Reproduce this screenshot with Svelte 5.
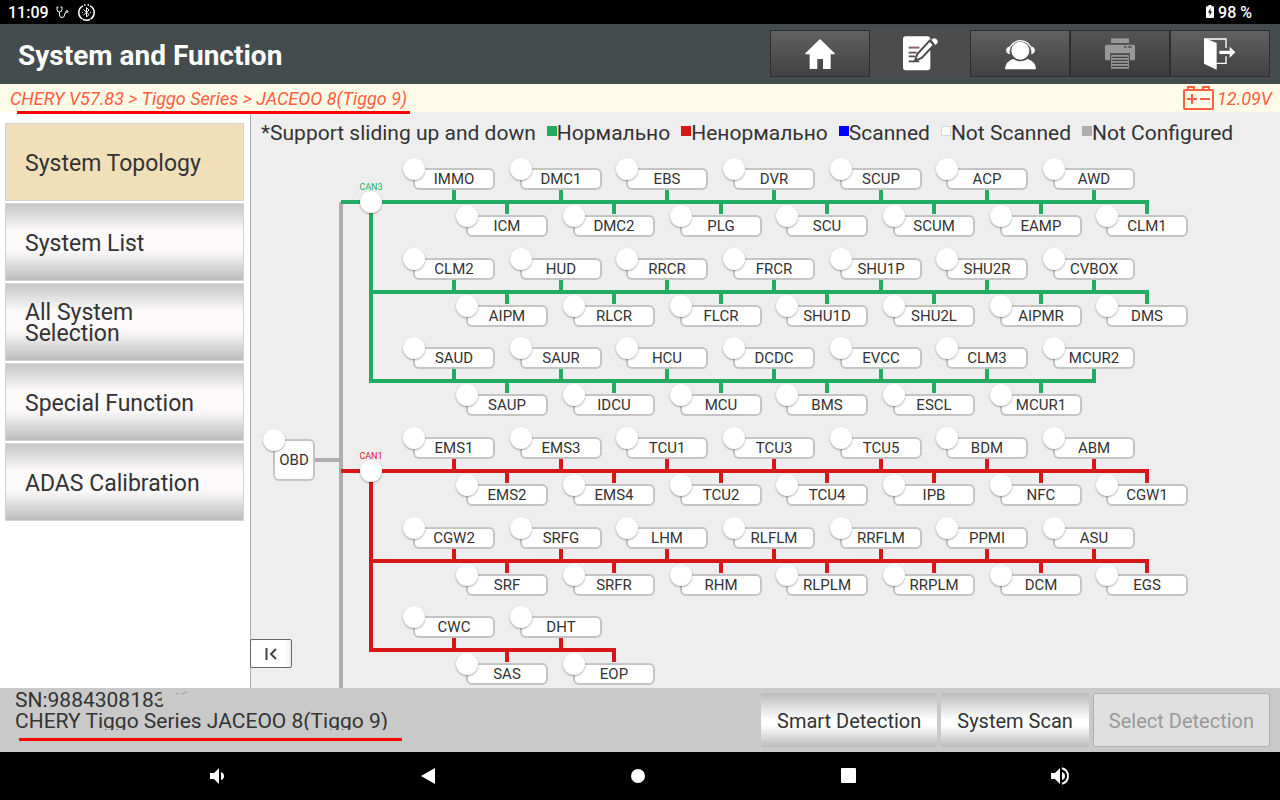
<script lang="ts">
    type Bus = {
        y: number;
        color: string;
        nodes: string[];
    };

    const GREEN = "#22ac62";
    const RED = "#d91616";

    // distance between two neighbouring modules, alternating above / below the bus
    const FIRST_X = 203;
    const STEP = 160 / 3;

    const buses: Bus[] = [
        { y: 50, color: GREEN, nodes: ["IMMO", "ICM", "DMC1", "DMC2", "EBS", "PLG", "DVR", "SCU", "SCUP", "SCUM", "ACP", "EAMP", "AWD", "CLM1"] },
        { y: 140, color: GREEN, nodes: ["CLM2", "AIPM", "HUD", "RLCR", "RRCR", "FLCR", "FRCR", "SHU1D", "SHU1P", "SHU2L", "SHU2R", "AIPMR", "CVBOX", "DMS"] },
        { y: 229, color: GREEN, nodes: ["SAUD", "SAUP", "SAUR", "IDCU", "HCU", "MCU", "DCDC", "BMS", "EVCC", "ESCL", "CLM3", "MCUR1", "MCUR2"] },
        { y: 319, color: RED, nodes: ["EMS1", "EMS2", "EMS3", "EMS4", "TCU1", "TCU2", "TCU3", "TCU4", "TCU5", "IPB", "BDM", "NFC", "ABM", "CGW1"] },
        { y: 409, color: RED, nodes: ["CGW2", "SRF", "SRFG", "SRFR", "LHM", "RHM", "RLFLM", "RLPLM", "RRFLM", "RRPLM", "PPMI", "DCM", "ASU", "EGS"] },
        { y: 498, color: RED, nodes: ["CWC", "SAS", "DHT", "EOP"] }
    ];

    const hubs = [
        { name: "CAN3", y: 50, end: 229, color: GREEN },
        { name: "CAN1", y: 319, end: 498, color: RED }
    ];

    const legend = [
        { label: "Нормально", color: GREEN },
        { label: "Ненормально", color: RED },
        { label: "Scanned", color: "#0000ff" },
        { label: "Not Scanned", color: "#ffffff" },
        { label: "Not Configured", color: "#aeaeae" }
    ];

    const menu = ["System Topology", "System List", "All System Selection", "Special Function", "ADAS Calibration"];
    let activeMenu = $state("System Topology");

    function nodeX(i: number) {
        return Math.round(FIRST_X + i * STEP);
    }

    function busPath(bus: Bus) {
        const isHubRow = hubs.some((h) => h.y === bus.y);
        let d = `M${isHubRow ? 90 : 120} ${bus.y}H${nodeX(bus.nodes.length - 1) + 2}`;
        bus.nodes.forEach((_, i) => {
            d += `M${nodeX(i)} ${bus.y}v${i % 2 ? 12 : -12}`;
        });
        return d;
    }
</script>

<div class="screen">
    <div class="status">
        <span>11:09</span>
        <svg class="steth" width="13" height="13" viewBox="0 0 13 13" fill="none" stroke="#fff">
            <path d="M2.500 1H1v2.500a2.500 2.500 0 0 0 5 0V1H4.500M3.500 6v3a2.500 2.500 0 0 0 5 0q0-2.500 2-3" />
            <circle cx="11" cy="5.500" r="1" />
        </svg>
        <svg width="17" height="17" viewBox="0 0 17 17" fill="none" stroke="#fff">
            <path d="M5 1.800A7.500 7.500 0 0 0 4.500 15M12 1.800A7.500 7.500 0 0 1 12.500 15M5 15.500q3.500 1.500 7 0M6 .9h1.500M9.500 .9H11" stroke-width="1.500" />
            <path d="M5.500 5.500l5.500 5-2.500 2.500V3.500L11 6l-5.500 5M4 8.300h1M12 8.300h1" />
        </svg>
        <span class="battery">
            <svg width="8" height="13" viewBox="0 0 8 13">
                <path d="M2.500 0h3v1.300H7q1 0 1 1V12q0 1-1 1H1q-1 0-1-1V2.300q0-1 1-1h1.500z" fill="#fff" />
                <path d="M4.800 3L2 7.500h1.800L3.400 11 6 6.500H4.300z" fill="#000" />
            </svg>
            98 %
        </span>
    </div>

    <header>
        <h1>System and Function</h1>
        <div class="tools">
            <button aria-label="Home">
                <svg width="30" height="30" viewBox="0 0 90 90" fill="#fff">
                    <path d="M45 0L89 43v3H77v44H54V60H37v30H14V46H1v-3z" />
                </svg>
            </button>
            <button class="current" aria-label="Report">
                <svg width="35" height="35" viewBox="0 0 105 105">
                    <path d="M8 1h65q9 0 9 9v84q0 9-9 9H8q-8 0-8-9V9q0-8 8-8z" fill="#fff" />
                    <path d="M17 35h32M17 50h24M17 61h20M17 76h32" fill="none" stroke="#5a4a4c" stroke-width="5" />
                    <path d="M17 33h32M17 52h24" fill="none" stroke="#e39aa0" stroke-width="2" />
                    <path d="M80 14L93 27 56 66 36 74 43 54z" fill="#fff" stroke="#4c4c4c" stroke-width="6" />
                    <path d="M85 11q8-8 15-2 8 7 1 15l-4 3z" fill="#fff" />
                </svg>
            </button>
            <button aria-label="Support">
                <svg width="31" height="32" viewBox="0 0 93 96" fill="#fff">
                    <circle cx="46" cy="38" r="27" />
                    <path d="M13 36A34 34 0 0 1 80 36" fill="none" stroke="#fff" stroke-width="4" />
                    <path d="M14 25v24Q4 47 3 37q1-9 11-12zM79 25v24q10-2 11-12-1-9-11-12z" />
                    <path d="M0 94Q2 69 25 63q21 14 43 0 23 6 25 31z" />
                </svg>
            </button>
            <button class="off" disabled aria-label="Print">
                <svg width="30" height="31" viewBox="0 0 90 93" fill="#999">
                    <path d="M18 1h54v14H18z" />
                    <path d="M5 20h80q5 0 5 5v37q0 5-5 5H75V46H15v21H5q-5 0-5-5V25q0-5 5-5z" />
                    <path d="M57 25h8v4h-8zM70 25h10v4H70z" fill="#4a4a4a" />
                    <path d="M19 51h52v5H19zM21 60h48v5H21zM21 69h48v5H21zM21 78h48v5H21zM19 87h52v5H19z" />
                    <path d="M20 52v39M70 52v39" stroke="#999" stroke-width="3" />
                </svg>
            </button>
            <button aria-label="Exit">
                <svg width="32" height="32" viewBox="0 0 96 96" fill="#fff">
                    <path d="M0 1h4l34 14v80L0 77z" />
                    <path d="M4 3h62v27M66 55v21H38" fill="none" stroke="#fff" stroke-width="4" />
                    <path d="M46 38h31V26l17 17-17 16V48H46z" />
                </svg>
            </button>
        </div>
    </header>

    <div class="path">
        <span>CHERY V57.83 &gt; Tiggo Series &gt; JACEOO 8(Tiggo 9)</span>
        <i class="mark top"></i>
        <span class="volt">
            <svg width="31" height="24" viewBox="0 0 31 24" fill="none" stroke="#ff6040" stroke-width="2">
                <rect x="1" y="4" width="29" height="19" rx="1" />
                <path d="M5 4V1h6v3M20 4V1h6v3M4 13h10M9 8v10M17 13h10" />
            </svg>
            12.09V
        </span>
    </div>

    <main>
        <nav>
            {#each menu as item}
                <button class:active={activeMenu === item} onclick={() => (activeMenu = item)}>
                    <span>{item}</span>
                </button>
            {/each}
        </nav>

        <section>
            <div class="legend">
                <span>*Support sliding up and down</span>
                {#each legend as l}
                    <span class="key">
                        <i class:outlined={l.color === "#ffffff"} style="background: {l.color}"></i>{l.label}
                    </span>
                {/each}
            </div>

            <div class="topology">
                <svg class="wires" width="960" height="560" fill="none" stroke-width="4">
                    <path d="M90 50V560M60 308H90" stroke="#aeaeae" />
                    {#each buses as bus}
                        <path d={busPath(bus)} stroke={bus.color} />
                    {/each}
                    {#each hubs as hub}
                        <path d="M120 {hub.y}V{hub.end + 2}" stroke={hub.color} />
                    {/each}
                </svg>

                <button class="node obd">OBD</button>

                {#each hubs as hub}
                    <div class="hub" style="top: {hub.y - 18}px; color: {hub.color}">
                        {hub.name}
                        <i class="dot"></i>
                    </div>
                {/each}

                {#each buses as bus}
                    {#each bus.nodes as name, i}
                        <button class="node" style="left: {nodeX(i) - 41}px; top: {bus.y + (i % 2 ? 13 : -34)}px">{name}</button>
                    {/each}
                {/each}
            </div>

            <button class="collapse" aria-label="Collapse menu">
                <svg width="12" height="12" viewBox="0 0 12 12" fill="none" stroke="#444" stroke-width="2">
                    <path d="M1.500 0v12M11 1L6 6l5 5" />
                </svg>
            </button>
        </section>
    </main>

    <footer>
        <div class="vehicle">
            <div class="serial">
                SN:9884308183
                <svg class="smudge" width="32" height="21" viewBox="0 0 32 21">
                    <path d="M6 0h26v21H4l3-5-3-4 1-4-1-4z" fill="#c9c9c9" />
                    <path d="M19 4l3-1M25 4l5-2" stroke="#999" />
                </svg>
            </div>
            <div>CHERY Tiggo Series JACEOO 8(Tiggo 9)</div>
        </div>
        <i class="mark bottom"></i>
        <div class="actions">
            <button>Smart Detection</button>
            <button>System Scan</button>
            <button disabled>Select Detection</button>
        </div>
    </footer>

    <div class="navbar">
        <button aria-label="Volume down">
            <svg width="16" height="16" viewBox="0 0 16 16" fill="#fff"><path d="M1 5h4l5-5v16l-5-5H1zM12 4q3 1 3 4t-3 4z" /></svg>
        </button>
        <button aria-label="Back">
            <svg width="16" height="16" viewBox="0 0 16 16" fill="#fff"><path d="M15 0v16L1 8z" /></svg>
        </button>
        <button aria-label="Home screen">
            <svg width="16" height="16" viewBox="0 0 16 16" fill="#fff"><circle cx="8" cy="8" r="7" /></svg>
        </button>
        <button aria-label="Recent apps">
            <svg width="16" height="16" viewBox="0 0 16 16" fill="#fff"><rect width="15" height="15" rx="1" /></svg>
        </button>
        <button aria-label="Volume up">
            <svg width="18" height="18" viewBox="0 0 18 18" fill="#fff">
                <path d="M0 6h4l5-5v16l-5-5H0zM11 5q3 1 3 4t-3 4z" />
                <path d="M11 1.200q6 1.800 6 7.800t-6 7.800" fill="none" stroke="#fff" stroke-width="2" />
            </svg>
        </button>
    </div>
</div>

<style>
    :global(body) {
        margin: 0;
    }
    .screen {
        display: flex;
        flex-direction: column;
        height: 100vh;
        overflow: hidden;
        font-family: Roboto, sans-serif;
        color: #333;
        background: #fff;
    }
    button {
        font: inherit;
        color: inherit;
        margin: 0;
        padding: 0;
        border: none;
        background: none;
        cursor: pointer;
    }
    svg {
        display: block;
    }
    .status {
        display: flex;
        align-items: center;
        height: 24px;
        padding: 0 28px 0 8px;
        background: #000;
        color: #fff;
        font-size: 16px;
        font-weight: 500;
    }
    .steth {
        margin: 0 9px 0 7px;
    }
    .battery {
        display: flex;
        align-items: center;
        gap: 4px;
        margin-left: auto;
    }
    .battery svg {
        margin-bottom: 2px;
    }
    header {
        display: flex;
        align-items: center;
        justify-content: space-between;
        height: 60px;
        padding: 0 10px 0 18px;
        background: #444c4e;
    }
    h1 {
        margin: 0;
        padding-top: 2px;
        font-size: 28px;
        font-weight: 700;
        color: #fff;
    }
    .tools {
        display: flex;
        padding-bottom: 1px;
    }
    .tools button {
        display: flex;
        align-items: center;
        justify-content: center;
        box-sizing: border-box;
        width: 100px;
        height: 47px;
        border: 1px solid #2d2d2d;
        background: linear-gradient(#616161, #414141);
    }
    .tools .current {
        border-color: #4c4c4c;
        background: #4c4c4c;
    }
    .tools .off {
        background: linear-gradient(#555, #3b3b3b);
    }
    .path {
        position: relative;
        display: flex;
        align-items: center;
        justify-content: space-between;
        height: 28px;
        padding: 0 8px 0 10px;
        background: #fffbe9;
        color: #ff6040;
        font-size: 18px;
        font-style: italic;
    }
    .volt {
        display: flex;
        align-items: center;
        gap: 3px;
    }
    .mark {
        position: absolute;
        z-index: 2;
        height: 3px;
        background: #f00;
    }
    .mark.top {
        left: 17px;
        bottom: -2px;
        width: 393px;
    }
    .mark.bottom {
        left: 19px;
        bottom: 11px;
        width: 383px;
    }
    main {
        display: flex;
        flex: 1;
        min-height: 0;
    }
    nav {
        display: flex;
        flex-direction: column;
        gap: 2px;
        box-sizing: border-box;
        width: 251px;
        padding: 11px 6px 0 5px;
        border-right: 1px solid #a9adb9;
    }
    nav button {
        display: flex;
        align-items: center;
        box-sizing: border-box;
        height: 78px;
        padding: 2px 36px 0 19px;
        border: 1px solid #d2d2d2;
        background: linear-gradient(#c6c6c6, #fbf9fa 35%, #fbf9fa 62%, #bcbcbc);
        font-size: 23px;
        line-height: 21px;
        text-align: left;
    }
    nav .active {
        background: #f1dfb9;
    }
    section {
        position: relative;
        display: flex;
        flex: 1;
        flex-direction: column;
        min-width: 0;
        background: #eee;
    }
    .legend {
        display: flex;
        align-items: center;
        gap: 11px;
        box-sizing: border-box;
        height: 40px;
        padding: 2px 0 0 10px;
        font-size: 21px;
        white-space: nowrap;
    }
    .key {
        display: flex;
    }
    .key i {
        box-sizing: border-box;
        width: 10px;
        height: 10px;
        margin-top: 5px;
    }
    .outlined {
        border: 1px solid #d8d8d8;
    }
    .topology {
        position: relative;
        flex: 1;
        min-height: 0;
        overflow: hidden;
    }
    .node {
        position: absolute;
        box-sizing: border-box;
        width: 82px;
        height: 22px;
        border: 2px solid #c4c4c4;
        border-radius: 6px;
        background: #fff;
        font-size: 15px;
        line-height: 18px;
        text-align: center;
    }
    .node::before,
    .dot {
        width: 22px;
        height: 22px;
        border-radius: 50%;
        background: #fff;
        box-shadow: 0 1px 2px rgba(0, 0, 0, 0.35);
    }
    .node::before {
        content: "";
        position: absolute;
        left: -12px;
        top: -12px;
    }
    .obd {
        left: 22px;
        top: 287px;
        width: 42px;
        height: 42px;
    }
    .hub {
        position: absolute;
        left: 100px;
        display: flex;
        flex-direction: column;
        align-items: center;
        width: 40px;
        font-size: 9px;
        line-height: 7px;
    }
    .collapse {
        position: absolute;
        left: -1px;
        bottom: 20px;
        display: flex;
        align-items: center;
        justify-content: center;
        box-sizing: border-box;
        width: 42px;
        height: 29px;
        border: 1px solid #666;
        border-radius: 2px;
        background: linear-gradient(90deg, #fff 85%, #eee);
    }
    footer {
        position: relative;
        display: flex;
        justify-content: space-between;
        height: 64px;
        background: #c9c9c9;
    }
    .vehicle {
        box-sizing: border-box;
        height: 42px;
        padding: 2px 0 0 15px;
        overflow: hidden;
        font-size: 21px;
        line-height: 21px;
    }
    .serial {
        position: relative;
        width: max-content;
    }
    .smudge {
        position: absolute;
        top: 0;
        right: -23px;
    }
    .actions {
        display: flex;
        gap: 4px;
        padding: 5px 10px;
    }
    .actions button {
        box-sizing: border-box;
        padding: 2px 16px 0;
        border-radius: 2px;
        background: linear-gradient(#bbb, #fff 50%, #fff 60%, #bbb);
        font-size: 20px;
    }
    .actions button:disabled {
        padding: 2px 15px 0;
        border: 1px solid #b0b0b0;
        background: #e0e0e0;
        color: #999;
    }
    .navbar {
        display: flex;
        align-items: center;
        justify-content: space-around;
        height: 48px;
        padding: 0 115px 0 112px;
        background: #000;
    }
    .navbar button {
        display: flex;
        justify-content: center;
        width: 40px;
        padding: 12px 0;
    }
</style>
